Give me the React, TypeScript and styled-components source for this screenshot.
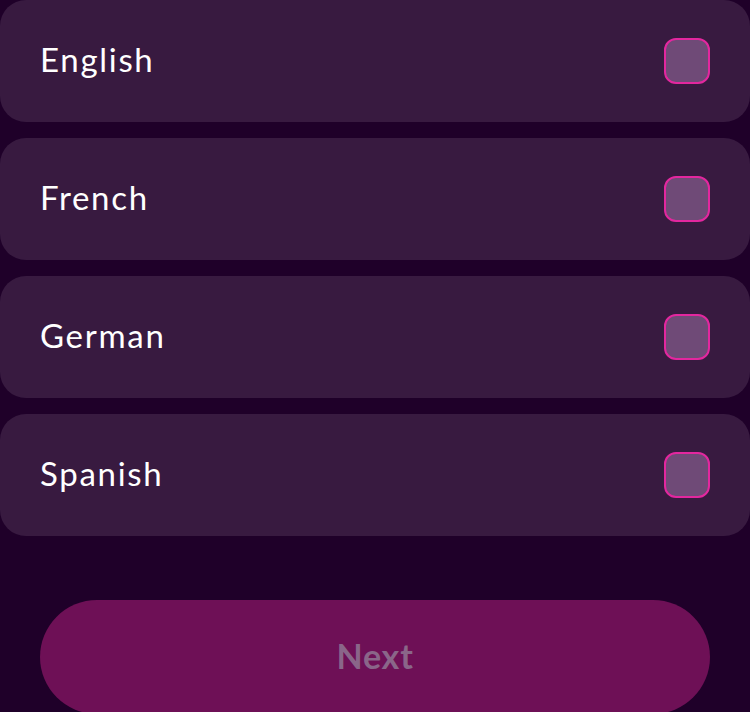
import React from "react";
import styled, { createGlobalStyle } from "styled-components";

const Global = createGlobalStyle`
  html, body { margin: 0; padding: 0; background: #1f0029; }
  body { font-family: Lato, "Open Sans", sans-serif; }
`;

const Page = styled.div`
  width: 750px;
  height: 712px;
  overflow: hidden;
  background: #1f0029;
  display: flex;
  flex-direction: column;
`;

const List = styled.div`
  display: flex;
  flex-direction: column;
  gap: 16px;
`;

const Card = styled.label`
  height: 122px;
  box-sizing: border-box;
  padding: 0 40px;
  background: #381a40;
  border-radius: 26px;
  display: flex;
  align-items: center;
  justify-content: space-between;
  cursor: pointer;
`;

const Label = styled.span`
  color: #ffffff;
  font-size: 33px;
  line-height: 40px;
  padding-bottom: 4px;
  font-weight: 400;
  letter-spacing: 1.7px;
`;

const Box = styled.span`
  width: 46px;
  height: 46px;
  box-sizing: border-box;
  border: 2px solid #e3279f;
  border-radius: 12px;
  background: #6f4a77;
`;

const Footer = styled.div`
  padding: 64px 40px 0;
`;

const NextButton = styled.button`
  width: 100%;
  height: 114px;
  border: none;
  border-radius: 57px;
  background: #6e1056;
  color: #8a6689;
  font-family: Lato, sans-serif;
  font-size: 34px;
  font-weight: 700;
  letter-spacing: 0.8px;
  display: flex;
  align-items: center;
  justify-content: center;
  padding: 0 0 4px;
`;

const languages = ["English", "French", "German", "Spanish"];

export default function App() {
  return (
    <Page>
      <Global />
      <List>
        {languages.map((l) => (
          <Card key={l}>
            <Label>{l}</Label>
            <Box />
          </Card>
        ))}
      </List>
      <Footer>
        <NextButton disabled>Next</NextButton>
      </Footer>
    </Page>
  );
}
